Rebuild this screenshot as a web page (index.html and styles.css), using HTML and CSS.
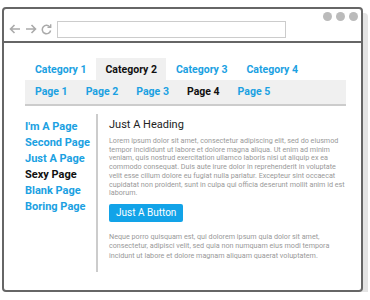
FILE: index.html
```html
<!DOCTYPE html>
<html lang="en">
<head>
    <meta charset="UTF-8">
    <title>Wireframe</title>
    <link rel="stylesheet" href="styles.css">
</head>
<body>
    <div class="window">
        <div class="toolbar">
            <svg class="nav-icon" width="12" height="10" viewBox="0 0 12 10">
                <path d="M11 5H1.5M5.5 1L1.5 5l4 4" fill="none" stroke="#aaa" stroke-width="1.6"/>
            </svg>
            <svg class="nav-icon" width="12" height="10" viewBox="0 0 12 10">
                <path d="M1 5h9.5M6.5 1l4 4-4 4" fill="none" stroke="#aaa" stroke-width="1.6"/>
            </svg>
            <svg class="nav-icon" width="11" height="11" viewBox="0 0 11 11">
                <path d="M9 3.2A4.2 4.2 0 1 0 9.6 6.5" fill="none" stroke="#aaa" stroke-width="1.5"/>
                <path d="M6.5 3.4h3.2V0.3" fill="none" stroke="#aaa" stroke-width="1.4"/>
            </svg>
            <div class="address"></div>
            <div class="dots">
                <span></span><span></span><span></span>
            </div>
        </div>

        <div class="page">
            <ul class="tabs">
                <li><a href="#">Category 1</a></li>
                <li class="active"><a href="#">Category 2</a></li>
                <li><a href="#">Category 3</a></li>
                <li><a href="#">Category 4</a></li>
            </ul>
            <ul class="subnav">
                <li><a href="#">Page 1</a></li>
                <li><a href="#">Page 2</a></li>
                <li><a href="#">Page 3</a></li>
                <li class="active"><a href="#">Page 4</a></li>
                <li><a href="#">Page 5</a></li>
            </ul>

            <div class="main">
                <ul class="sidebar">
                    <li><a href="#">I'm A Page</a></li>
                    <li><a href="#">Second Page</a></li>
                    <li><a href="#">Just A Page</a></li>
                    <li class="active"><a href="#">Sexy Page</a></li>
                    <li><a href="#">Blank Page</a></li>
                    <li><a href="#">Boring Page</a></li>
                </ul>
                <div class="content">
                    <h1>Just A Heading</h1>
                    <p>Lorem ipsum dolor sit amet, consectetur adipiscing elit, sed do eiusmod tempor incididunt ut labore et dolore magna aliqua. Ut enim ad minim veniam, quis nostrud exercitation ullamco laboris nisi ut aliquip ex ea commodo consequat. Duis aute irure dolor in reprehenderit in voluptate velit esse cillum dolore eu fugiat nulla pariatur. Excepteur sint occaecat cupidatat non proident, sunt in culpa qui officia deserunt mollit anim id est laborum.</p>
                    <button type="button">Just A Button</button>
                    <p class="note">Neque porro quisquam est, qui dolorem ipsum quia dolor sit amet, consectetur, adipisci velit, sed quia non numquam eius modi tempora incidunt ut labore et dolore magnam aliquam quaerat voluptatem.</p>
                </div>
            </div>
        </div>
    </div>
</body>
</html>
```

FILE: styles.css
```css
body {
    margin: 0;
    padding: 7px 0 0 2px;
    background: #fff;
    font-family: Roboto, "Liberation Sans", sans-serif;
}
ul {
    list-style: none;
    margin: 0;
    padding: 0;
}
a {
    text-decoration: none;
    color: #1ba1e2;
}
.window {
    width: 357px;
    height: 281px;
    border: 2px solid #666;
    border-radius: 4px;
    box-shadow: 5px 6px 0 #e4e4e4;
    background: #fff;
}
.toolbar {
    display: flex;
    align-items: center;
    height: 32px;
    border-bottom: 2px solid #666;
    padding: 0 0 0 5px;
}
.nav-icon {
    margin-right: 4px;
    margin-top: 8px;
}
.address {
    width: 227px;
    height: 15px;
    margin-top: 8px;
    margin-left: 1px;
    border: 1px solid #ccc;
}
.dots {
    display: flex;
    gap: 4px;
    align-self: flex-start;
    margin: 3px 0 0 37px;
}
.dots span {
    width: 9px;
    height: 9px;
    border-radius: 50%;
    background: #bbb;
}
.page {
    padding: 15px 15px 0 21px;
}
.tabs, .subnav {
    display: flex;
    font-size: 10.5px;
    font-weight: 700;
}
.tabs li a {
    display: block;
    height: 22px;
    line-height: 24px;
    padding: 0 9px 0 10px;
}
.tabs .active a {
    background: #f0f0f0;
    color: #111;
}
.subnav {
    background: #f0f0f0;
    border-bottom: 2px solid #ccc;
    height: 24px;
    align-items: center;
    padding-left: 1px;
}
.subnav li a {
    display: block;
    padding: 0 9px;
    line-height: 24px;
}
.subnav .active a {
    color: #111;
}
.main {
    display: flex;
    margin-top: 8px;
}
.sidebar {
    width: 71px;
    padding-top: 5px;
    font-size: 11px;
    font-weight: 700;
    line-height: 16px;
    border-right: 2px solid #ccc;
    height: 153px;
}
.sidebar .active a {
    color: #111;
}
.content {
    padding-left: 11px;
    width: 236px;
}
.content h1 {
    margin: 4px 0 6px;
    font-size: 11px;
    font-weight: 400;
    color: #222;
}
.content p {
    margin: 0;
    font-size: 7.2px;
    line-height: 8.7px;
    color: #999;
}
.content .note {
    line-height: 9.3px;
}
.content button {
    margin: 6px 0 10px;
    height: 18px;
    padding: 0 7px;
    border: none;
    border-radius: 2px;
    background: #12a3e8;
    color: #fff;
    font-family: inherit;
    font-size: 10px;
}
```
